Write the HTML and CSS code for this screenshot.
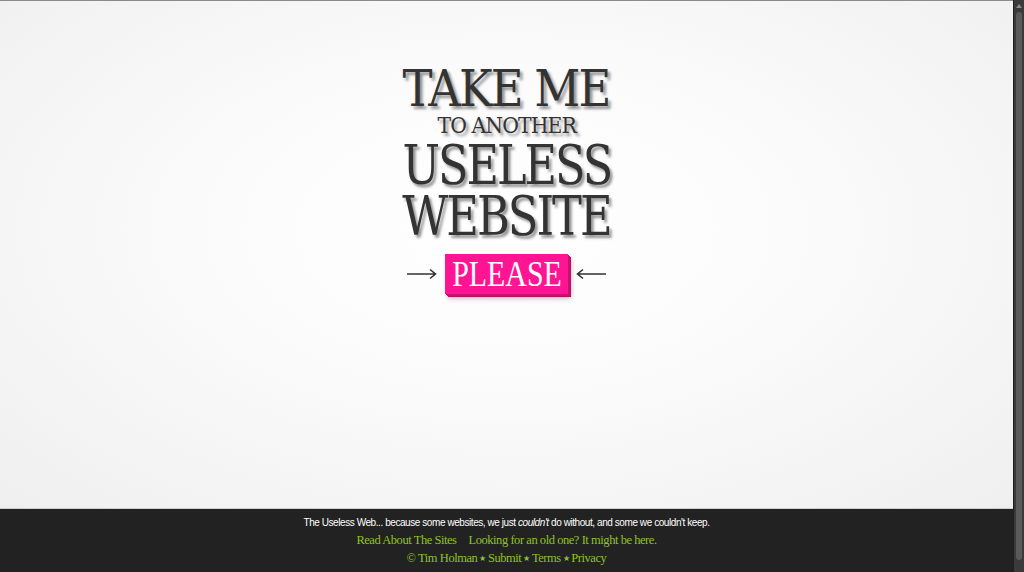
FILE: index.html
```html
<!DOCTYPE html>
<html lang="en">
<head>
<meta charset="utf-8">
<title>The Useless Web</title>
<link rel="stylesheet" href="styles.css">
</head>
<body>
<div class="frame">
  <div class="main">
    <div class="stage">
      <h1 class="title">
        <span class="line l1">TAKE ME</span>
        <span class="line l2">TO ANOTHER</span>
        <span class="line l3">USELESS</span>
        <span class="line l4">WEBSITE</span>
      </h1>
      <div class="cta">
        <svg class="arrow" width="30" height="12" viewBox="0 0 30 12"><path d="M0 6H28M23 1.5L28.5 6L23 10.5" fill="none" stroke="#333" stroke-width="1.6"/></svg>
        <a class="button" href="#"><span class="button-text">PLEASE</span></a>
        <svg class="arrow" width="30" height="12" viewBox="0 0 30 12"><path d="M30 6H2M7 1.5L1.5 6L7 10.5" fill="none" stroke="#333" stroke-width="1.6"/></svg>
      </div>
    </div>
    <footer class="footer">
      <p class="tagline">The Useless Web... because some websites, we just <em>couldn't</em> do without, and some we couldn't keep.</p>
      <p class="links"><a href="#">Read About The Sites</a><a href="#">Looking for an old one? It might be here.</a></p>
      <p class="credits"><a href="#">© Tim Holman</a><span class="star">★</span><a href="#">Submit</a><span class="star">★</span><a href="#">Terms</a><span class="star">★</span><a href="#">Privacy</a></p>
    </footer>
  </div>
  <div class="scrollbar"><div class="scroll-up"></div><div class="thumb"></div></div>
</div>
</body>
</html>
```
FILE: styles.css
```css
html, body {
  margin: 0;
  padding: 0;
  height: 100%;
  overflow: hidden;
}
.frame {
  display: flex;
  height: 100vh;
  background: #2a2a2a;
}
.main {
  flex: 1;
  display: flex;
  flex-direction: column;
  min-width: 0;
}
.stage {
  flex: 1;
  display: flex;
  flex-direction: column;
  align-items: center;
  border-top: 1px solid #8a8a8a;
  border-bottom: 1px solid #cfcfcf;
  background: radial-gradient(ellipse at 50% 45%, #ffffff 0%, #fbfbfb 40%, #efefef 100%);
  padding-top: 70px;
}
.title {
  margin: 0;
  display: flex;
  flex-direction: column;
  align-items: center;
  font-family: "DejaVu Serif", serif;
  font-weight: normal;
  color: #333;
  text-shadow: 3px 3px 3px rgba(0, 0, 0, 0.42);
}
.line {
  display: block;
  white-space: nowrap;
}
.l1 { font-size: 50px; line-height: 37px; letter-spacing: -2px; transform: scaleX(0.9); }
.l2 { font-size: 22px; line-height: 36px; letter-spacing: -1px; transform: scaleX(0.927); }
.l3 { font-size: 55px; line-height: 40px; letter-spacing: -2.5px; transform: scaleX(0.81); margin-top: 1px; }
.l4 { font-size: 54px; line-height: 39px; letter-spacing: -2.5px; transform: scaleX(0.83); margin-top: 12px; }
.cta {
  margin-top: 18px;
  display: flex;
  align-items: center;
  gap: 8px;
}
.arrow {
  display: block;
}
.button {
  display: flex;
  justify-content: center;
  width: 123px;
  height: 40px;
  background: #ff1493;
  color: #fff;
  text-decoration: none;
  font-family: "Liberation Serif", serif;
  font-size: 36px;
  line-height: 40px;
  box-shadow: 1px 1px 0 #c8126f, 2px 2px 0 #c8126f, 3px 3px 0 #b80f66, 3px 4px 5px rgba(0,0,0,0.3);
}
.button-text {
  display: block;
  white-space: nowrap;
  transform: scaleX(0.83);
}
.footer {
  height: 63px;
  background: #222;
  text-align: center;
  padding-top: 6px;
  box-sizing: border-box;
}
.footer p {
  margin: 0;
  white-space: nowrap;
}
.tagline {
  font-family: "Liberation Sans", Arial, sans-serif;
  font-size: 10px;
  line-height: 16px;
  color: #fff;
  letter-spacing: -0.43px;
}
.links, .credits {
  font-family: "Liberation Serif", serif;
  font-size: 12.5px;
  line-height: 18px;
  letter-spacing: -0.45px;
}
.links a, .credits a {
  color: #8fc12a;
  text-decoration: none;
}
.links a + a {
  margin-left: 12px;
}
.star {
  color: #8fc12a;
  font-size: 8px;
  margin: 0 2px;
  vertical-align: 1px;
}
.scrollbar {
  width: 10px;
  background: #3a3a3a;
  display: flex;
  flex-direction: column;
  align-items: center;
  border-left: 1px solid #1e1e1e;
}
.scroll-up {
  width: 0;
  height: 0;
  margin-top: 4px;
  border-left: 3px solid transparent;
  border-right: 3px solid transparent;
  border-bottom: 4px solid #8a8a8a;
}
.thumb {
  width: 6px;
  flex: 1;
  margin: 4px 0 12px;
  background: #5a5a5a;
  border-radius: 3px;
}
```
